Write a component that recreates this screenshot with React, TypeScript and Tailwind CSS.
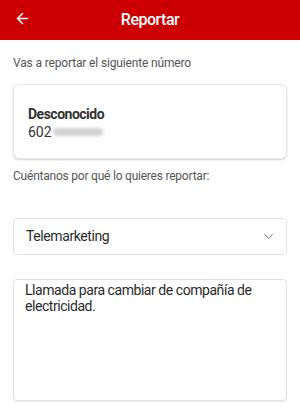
import { ArrowLeft, ChevronDown } from "lucide-react";

export default function App() {
  return (
    <div className="w-[300px] h-[407px] bg-white overflow-hidden" style={{ fontFamily: "Roboto, 'Liberation Sans', sans-serif" }}>
      {/* Header */}
      <header className="relative flex h-10 items-center justify-center bg-[#cc0000]">
        <button className="absolute left-[14px] top-[10px] text-white">
          <ArrowLeft className="h-[17px] w-[17px]" strokeWidth={2.2} />
        </button>
        <h1 className="text-[16px] font-medium tracking-[-0.5px] text-white">Reportar</h1>
      </header>

      <main className="px-[13px]">
        <p className="mt-[15px] text-[12px] leading-4 tracking-[-0.15px] text-[#555]">Vas a reportar el siguiente número</p>

        <div className="mt-[13px] h-[75px] rounded-[6px] border border-[#e6e6e6] bg-white px-[14px] pt-[20px] shadow-[0_1px_2px_rgba(0,0,0,0.18)]">
          <div className="text-[14px] font-bold leading-[18px] tracking-[-0.5px] text-[#333]">Desconocido</div>
          <div className="flex items-center text-[14px] leading-[18px] text-[#333]">
            <span>602</span>
            <span className="ml-[1px] h-[8px] w-[50px] rounded-sm bg-[#d4d4d4] blur-[1.5px]" />
          </div>
        </div>

        <p className="mt-[9px] text-[12px] leading-4 tracking-[-0.22px] text-[#555]">Cuéntanos por qué lo quieres reportar:</p>

        <div className="mt-[34px] flex h-[37px] items-center justify-between rounded-[4px] border border-[#e3e3e3] pl-[12px] pr-[10px]">
          <span className="text-[14px] tracking-[-0.4px] text-[#2a2a2a]">Telemarketing</span>
          <ChevronDown className="h-[15px] w-[15px] text-[#777]" strokeWidth={1.6} />
        </div>

        <div className="mt-[24px] h-[122px] rounded-[4px] border border-[#e0e0e0] px-[11px] pt-[2px] shadow-[0_1px_1px_rgba(0,0,0,0.08)]">
          <p className="text-[14px] leading-[16px] tracking-[-0.45px] text-[#2a2a2a]">Llamada para cambiar de compañía de electricidad.</p>
        </div>
      </main>
    </div>
  );
}
